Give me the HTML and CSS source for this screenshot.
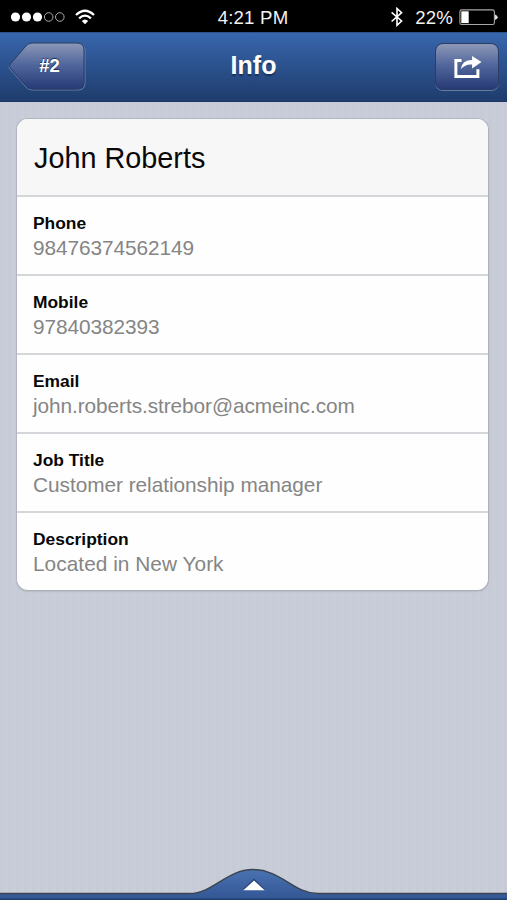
FILE: index.html
```html
<!DOCTYPE html>
<html lang="en">
<head>
<meta charset="utf-8">
<title>Info</title>
<link rel="stylesheet" href="styles.css">
</head>
<body>
<div class="screen">
  <div class="status">
    <div class="status-side">
      <svg class="signal" width="56" height="12" viewBox="0 0 56 12">
        <g fill="#fff"><circle cx="5.5" cy="6" r="4.6"/><circle cx="16.5" cy="6" r="4.6"/><circle cx="27.5" cy="6" r="4.6"/></g>
        <g fill="none" stroke="#aaa"><circle cx="38.7" cy="6" r="4.3"/><circle cx="49.8" cy="6" r="4.3"/></g>
      </svg>
      <svg class="wifi" width="20" height="16" viewBox="0 0 20 16">
        <g fill="none" stroke="#fff" stroke-width="2.3"><path d="M1 6Q10-2.4 19 6"/><path d="M4.1 9.4Q10 3.8 15.9 9.4"/></g>
        <path d="M6.8 12Q10 9 13.2 12L10 15.3Z" fill="#fff"/>
      </svg>
    </div>
    <div class="time">4:21 PM</div>
    <div class="status-side status-right">
      <svg class="bluetooth" width="12" height="20" viewBox="0 0 12 20"><path d="M.6 5.3L10.6 14 6 18.3V1.5L10.6 5.7.6 14.5" fill="none" stroke="#fff" stroke-width="1.6"/></svg>
      <span class="percent">22%</span>
      <svg class="battery" width="40" height="17" viewBox="0 0 40 17">
        <rect x=".9" y=".9" width="34.5" height="14.6" rx="1.8" fill="none" stroke="#a8a8a8" stroke-width="1.1"/>
        <rect x="2.3" y="2.3" width="7.4" height="11.8" fill="#fff"/>
        <path d="M36 5.5Q38.8 6.5 38.8 8.2T36 11Z" fill="#ddd"/>
      </svg>
    </div>
  </div>
  <header class="nav">
    <div class="back">
      <svg class="back-shape" width="78" height="50" viewBox="0 0 78 50">
        <defs><linearGradient id="backFill" x1="0" y1="0" x2="0" y2="1"><stop offset="0" stop-color="#8d98b7"/><stop offset=".45" stop-color="#53689d"/><stop offset="1" stop-color="#263b76"/></linearGradient></defs>
        <path d="M24 2H70Q77 2 77 9V41Q77 48 70 48H24Q20 48 17 44L1.5 26.5Q.5 25 1.5 23.5L17 6Q20 2 24 2Z" fill="none" stroke="#8594b5" stroke-opacity=".7"/>
        <path d="M24 1H69Q76 1 76 8V40Q76 47 69 47H24Q20 47 17 43L2 25.5Q1 24 2 22.5L17 5Q20 1 24 1Z" fill="url(#backFill)" stroke="#293d68"/>
      </svg>
      <span class="back-label">#2</span>
    </div>
    <h1 class="title">Info</h1>
    <div class="share">
      <svg width="30" height="24" viewBox="0 0 30 24">
        <path d="M9.5 4.4H3.9V20.4H25.9V13.3" fill="none" stroke="#fff" stroke-width="3"/>
        <path d="M8.7 13.2Q9.9 3.9 20.1 3.9V0L29.5 6.1 20.1 12.4V8.5Q13.7 7.6 8.7 13.2Z" fill="#fff"/>
      </svg>
    </div>
  </header>
  <main class="content">
    <section class="card">
      <h2 class="name">John Roberts</h2>
      <div class="row"><div class="label">Phone</div><div class="value phone">98476374562149</div></div>
      <div class="row"><div class="label">Mobile</div><div class="value mobile">97840382393</div></div>
      <div class="row"><div class="label">Email</div><div class="value email">john.roberts.strebor@acmeinc.com</div></div>
      <div class="row"><div class="label">Job Title</div><div class="value job">Customer relationship manager</div></div>
      <div class="row"><div class="label">Description</div><div class="value place">Located in New York</div></div>
    </section>
  </main>
  <footer class="drawer">
    <svg width="507" height="34" viewBox="0 0 507 34">
      <defs><linearGradient id="drawerFill" x1="0" y1="0" x2="0" y2="1"><stop offset="0" stop-color="#4a72b2"/><stop offset="1" stop-color="#315391"/></linearGradient></defs>
      <path d="M-2 36V27.6H190C212 27.6 227 3.6 253 3.6C281 3.6 294 27.6 318 27.6H509V36Z" fill="url(#drawerFill)" stroke="#3c4650" stroke-width="1.5"/>
      <path d="M0 33.3H507" stroke="#203e72" stroke-width="1.4"/>
      <path d="M243 23.2L254 12.5 265 23.2" fill="#29407a"/>
      <path d="M243.3 24.2L254 14.6 264.7 24.2Z" fill="#fff"/>
    </svg>
  </footer>
</div>
</body>
</html>
```
FILE: styles.css
```css
* { box-sizing: border-box; }
body { margin: 0; font-family: "Liberation Sans", Arial, sans-serif; }
h1, h2 { margin: 0; }
svg { display: block; flex: none; }

.screen {
  width: 507px;
  height: 900px;
  display: flex;
  flex-direction: column;
  overflow: hidden;
  background: repeating-linear-gradient(90deg, #c6cbd7 0 4px, #c8cdd8 4px 8px);
}

.status {
  height: 32px;
  flex: none;
  display: grid;
  grid-template-columns: 1fr auto 1fr;
  align-items: center;
  padding: 2px 8px 0 10px;
  background: #000;
  color: #f2f2f2;
  font-size: 18.6px;
  line-height: 30px;
}
.status-side { display: flex; align-items: center; }
.status-right { justify-content: flex-end; }
.signal, .wifi, .bluetooth { margin-bottom: 2px; }
.wifi { margin-left: 9px; }
.time { margin-left: -3px; padding-top: 1px; letter-spacing: .2px; }
.bluetooth { margin-right: 12px; }
.percent { margin-right: 6px; padding-top: 1px; letter-spacing: .2px; }

.nav {
  height: 70px;
  flex: none;
  display: grid;
  grid-template-columns: 1fr auto 1fr;
  align-items: start;
  padding: 10px 8px 0;
  background: linear-gradient(#3866ad, #1e3c6c);
  border-top: 1px solid #2b5089;
  border-bottom: 1px solid #1d3763;
  color: #fff;
}
.back { display: grid; width: 78px; height: 50px; margin-top: -1px; }
.back-shape, .back-label { grid-area: 1 / 1; }
.back-label {
  padding-left: 5px;
  font-size: 18.5px;
  font-weight: bold;
  line-height: 47px;
  text-align: center;
  text-shadow: 0 -1px 1px #1a2b52;
  z-index: 1;
}
.title {
  font-size: 25px;
  line-height: 44px;
  letter-spacing: .1px;
  text-shadow: 0 2px 1px #18325d;
}
.share {
  justify-self: end;
  width: 64px;
  height: 47px;
  padding-top: 2px;
  display: flex;
  align-items: center;
  justify-content: center;
  border: 1px solid #293d68;
  border-radius: 8px;
  background: linear-gradient(#8d98b7, #53689d 45%, #263b76);
  box-shadow: 0 1px 0 #8594b5b0;
}

.content { flex: 1; padding: 16px 18px 0 16px; }
.card {
  height: 473px;
  overflow: hidden;
  border: 1px solid #b1b5bf;
  border-right-color: #aeb1ba;
  border-bottom-color: #aaaeb5;
  border-radius: 12px;
  background: #fefefe;
  box-shadow: 0 1px 1px #aaafbb80;
}
.name {
  height: 76px;
  padding-left: 17px;
  background: #f7f7f7;
  color: #080808;
  font-size: 28.8px;
  font-weight: normal;
  line-height: 78px;
}
.row {
  height: 79px;
  padding: 16px 16px 0;
  border-top: 2px solid #d5d6da;
}
.label { color: #080808; font-size: 17.4px; font-weight: bold; line-height: 20px; }
.value { color: #858585; font-size: 20.8px; line-height: 30px; white-space: nowrap; }
.phone, .mobile, .email { letter-spacing: -.07px; }
.job { letter-spacing: -.03px; }
.place { letter-spacing: .05px; }

.drawer { height: 34px; flex: none; }
```
